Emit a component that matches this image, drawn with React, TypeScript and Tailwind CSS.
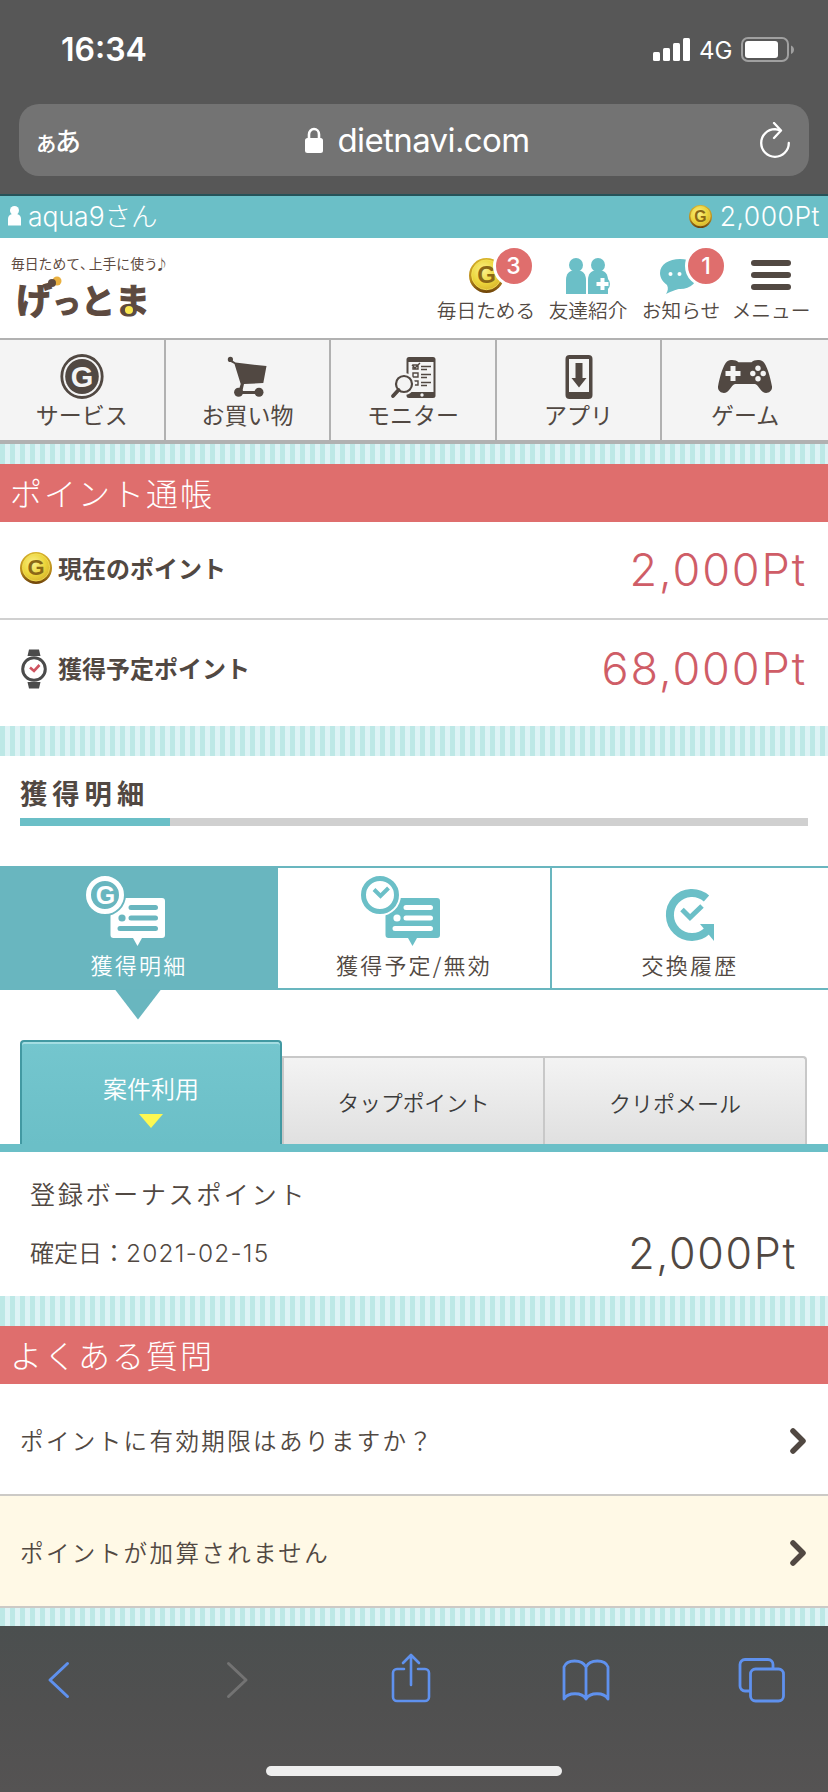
import type { ReactNode } from "react"

const NAV_ITEMS = [
  { label: "サービス", icon: <ServiceIcon /> },
  { label: "お買い物", icon: <CartIcon /> },
  { label: "モニター", icon: <MonitorIcon /> },
  { label: "アプリ", icon: <AppIcon /> },
  { label: "ゲーム", icon: <GameIcon /> },
]

const FAQ_ITEMS = [
  { question: "ポイントに有効期限はありますか？", className: "bg-white" },
  { question: "ポイントが加算されません", className: "bg-[#fff9e6]" },
]

function Coin({ className }: { className?: string }) {
  return (
    <svg viewBox="0 0 32 32" className={className}>
      <defs>
        <linearGradient id="coinRim" x1="0" y1="0" x2="0" y2="1">
          <stop offset="0" stopColor="#d8b42c" />
          <stop offset="0.6" stopColor="#b98a1c" />
          <stop offset="1" stopColor="#6d4208" />
        </linearGradient>
        <radialGradient id="coinFace" cx="0.4" cy="0.35" r="0.7">
          <stop offset="0" stopColor="#fbf08a" />
          <stop offset="0.6" stopColor="#ecd63c" />
          <stop offset="1" stopColor="#d9b52c" />
        </radialGradient>
      </defs>
      <circle cx="16" cy="16" r="16" fill="url(#coinRim)" />
      <circle cx="16" cy="15.4" r="13.6" fill="url(#coinFace)" stroke="#f4e25a" strokeWidth="0.8" />
      <text x="16" y="23" textAnchor="middle" fontSize="22" fontWeight="700" fill="#8a6716" fontFamily="Liberation Sans, sans-serif">G</text>
    </svg>
  )
}

function ServiceIcon() {
  return (
    <svg viewBox="0 0 44 46" className="w-[44px] h-[46px]">
      <ellipse cx="22" cy="23.5" rx="20.2" ry="21" fill="none" stroke="#514842" strokeWidth="2.8" />
      <ellipse cx="22" cy="23.5" rx="16.8" ry="17.6" fill="#514842" />
      <text x="22" y="33.5" textAnchor="middle" fontSize="29" fontWeight="700" fill="#f4f4f4" fontFamily="Liberation Sans, sans-serif">G</text>
    </svg>
  )
}

function CartIcon() {
  return (
    <svg viewBox="0 0 44 46" className="w-[44px] h-[46px]" fill="#514842">
      <circle cx="5.4" cy="6.4" r="2.6" />
      <path d="M5 6l5.5 3.5 31 3.6-3.2 17-19.3.8-1.6 7h14v3H12.5l3.2-9.8L9.5 11 4 8z" />
      <circle cx="13.6" cy="39.3" r="4.5" />
      <circle cx="34" cy="39.3" r="4.5" />
    </svg>
  )
}

function MonitorIcon() {
  return (
    <svg viewBox="0 0 48 46" className="w-[48px] h-[46px]">
      <rect x="17.5" y="4" width="29" height="41" rx="2.5" fill="#514842" />
      <rect x="19.5" y="9" width="25" height="30" fill="#f4f4f4" />
      <circle cx="33" cy="42" r="1.7" fill="#f4f4f4" />
      <g stroke="#514842" strokeWidth="1.4" fill="none">
        <path d="M24 12h5v4h-5zM24 20h5v4h-5zM24 28h5v4h-5zM32 13.5h10M32 16.5h6M32 21.5h10M32 24.5h6M32 29.5h10M32 32.5h6M23 12l3 3 5-5" />
      </g>
      <circle cx="15" cy="31" r="11" fill="#f4f4f4" />
      <path d="M9 37l-6 6" stroke="#f4f4f4" strokeWidth="7" />
      <circle cx="15" cy="31" r="8" fill="#f4f4f4" stroke="#514842" strokeWidth="2.2" />
      <path d="M9.5 37L4 43" stroke="#514842" strokeWidth="3.8" strokeLinecap="round" />
    </svg>
  )
}

function AppIcon() {
  return (
    <svg viewBox="0 0 28 46" className="w-[28px] h-[46px]" fill="#514842">
      <rect x="0.5" y="2" width="27" height="44" rx="4" />
      <rect x="4" y="6" width="20" height="33" fill="#f4f4f4" />
      <path d="M10.5 10h7v15h4L14 34.5 6.5 25h4z" />
    </svg>
  )
}

function GameIcon() {
  return (
    <svg viewBox="0 0 54 46" className="w-[54px] h-[46px]">
      <path d="M9 8.5c4-2.5 9-1.5 11.5.8h13C36 7 41 6 45 8.500c3.500 2.500 7.500 16 9 25 .6 5-5 8-9 5.500-3.500-2.200-5-8-8.500-8h-19c-3.500 0-5 5.800-8.500 8C5 41.500-.6 38.500 0 33.500c1.500-9 5.500-22.500 9-25z" fill="#514842" />
      <path d="M12.5 13h5v5h5v5h-5v5h-5v-5h-5v-5h5z" fill="#f4f4f4" />
      <g fill="#f4f4f4">
        <circle cx="40" cy="15.3" r="2.7" />
        <circle cx="40" cy="25.7" r="2.7" />
        <circle cx="34.8" cy="20.5" r="2.7" />
        <circle cx="45.2" cy="20.5" r="2.7" />
      </g>
    </svg>
  )
}

function FriendsIcon() {
  return (
    <svg viewBox="0 0 44 36" className="w-[44px] h-[36px]" fill="#6bbfc7">
      <circle cx="10" cy="7" r="7" />
      <path d="M0 36V22c0-6 3.500-9.500 7-9.500h6c3.500 0 7 3.500 7 9.500v14z" />
      <circle cx="32" cy="7" r="7" />
      <path d="M22 36V22c0-6 3.500-9.500 7-9.500h6c3.500 0 7 3.500 7 9.500v14z" />
      <circle cx="36.5" cy="26" r="7.5" />
      <path d="M34.5 20h4v4h4v4h-4v4h-4v-4h-4v-4h4z" fill="#fff" />
    </svg>
  )
}

function NewsIcon() {
  return (
    <svg viewBox="0 0 44 36" className="w-[44px] h-[36px]">
      <path d="M21 1c11 0 18 5.500 18 14S32 31 21 31c-2.500 0-7 1.500-14 5 2-3 2.500-6 1-9-4-3-7-7-7-12C1 6.500 10 1 21 1z" fill="#6bbfc7" />
      <circle cx="11.5" cy="16" r="2" fill="#fff" />
      <circle cx="20.5" cy="16" r="2" fill="#fff" />
    </svg>
  )
}

function WatchIcon() {
  return (
    <svg viewBox="0 0 28 40" className="w-[28px] h-[40px]">
      <path d="M9 0.500h10l1.500 6.500h-13zM7.500 33h13L19 39.500H9z" fill="#4b4b4b" />
      <circle cx="14" cy="20" r="11.3" fill="#fff" stroke="#4b4b4b" strokeWidth="3" />
      <path d="M10 18.500l4 3.500 5.500-6" fill="none" stroke="#cf5360" strokeWidth="2.6" />
    </svg>
  )
}

// speech bubble shared by the first two tabs, the badge in its corner differs
function DetailIcon({ color, bg, children }: { color: string; bg: string; children: ReactNode }) {
  return (
    <svg viewBox="0 0 106 72" className="w-[106px] h-[72px]">
      <path d="M27 24h49a3 3 0 013 3v34a3 3 0 01-3 3H56l-4.500 8L47 64H27.500a3 3 0 01-3-3V27a3 3 0 012.500-3z" fill={color} />
      <g stroke={bg} strokeWidth="5" strokeLinecap="round">
        <path d="M45 33.500h24.500M45 44h24.500M34 54.500h35.500" />
      </g>
      <circle cx="36" cy="44" r="3.6" fill={bg} />
      <circle cx="19" cy="21" r="21" fill={bg} />
      <circle cx="19" cy="21" r="16.5" fill={bg} stroke={color} strokeWidth="5" />
      {children}
    </svg>
  )
}

function HistoryIcon() {
  return (
    <svg viewBox="0 0 50 54" className="w-[50px] h-[54px]">
      <path d="M41.500 10.500A22 22 0 1042.500 42.500" fill="none" stroke="#6bbfc7" strokeWidth="8" />
      <path d="M35 36h14v17z" fill="#6bbfc7" />
      <path d="M17 21.500l8 8L37 18" fill="none" stroke="#6bbfc7" strokeWidth="5" />
    </svg>
  )
}

function Badge({ className, children }: { className: string; children: ReactNode }) {
  return (
    <span className={`absolute -top-[13px] w-[42px] h-[42px] rounded-full border-[3px] border-white bg-[#df6e6d] text-white text-[23px] leading-[36px] font-medium text-center font-['Inter',sans-serif] ${className}`}>
      {children}
    </span>
  )
}

function HeaderItem({ label, className, children }: { label: string; className: string; children: ReactNode }) {
  return (
    <div className={`flex flex-col items-center ${className}`}>
      <div className="relative h-9 flex justify-center">{children}</div>
      <span className="mt-[4px] text-[19.7px] leading-[24px] font-[350] whitespace-nowrap">{label}</span>
    </div>
  )
}

function Stripes({ className }: { className: string }) {
  return (
    <div className={`bg-[repeating-linear-gradient(90deg,#bde8e6_0px,#bde8e6_5px,#ddf3f5_5px,#ddf3f5_10px)] ${className}`} />
  )
}

function SectionTitle({ children }: { children: ReactNode }) {
  return (
    <h2 className="h-[58px] pl-[10px] bg-[#df6e6d] text-white font-light text-[32px] leading-[56px] tracking-[2px]">
      {children}
    </h2>
  )
}

export default function App() {
  return (
    <main className="w-[828px] h-[1792px] overflow-hidden flex flex-col bg-white text-[#514842] font-['Noto_Sans_CJK_JP',sans-serif]">
      {/* Status bar */}
      <div className="h-[104px] shrink-0 bg-[#575757] text-white flex justify-between pl-[61px] pr-[33px] font-['Inter',sans-serif]">
        <span className="mt-[30px] text-[32px] leading-[40px] font-semibold">16:34</span>
        <div className="mt-[36px] h-[28px] flex items-center">
          <svg viewBox="0 0 38 24" className="w-[38px] h-[24px]" fill="#fff">
            <rect x="0" y="14" width="7" height="9" rx="1.5" />
            <rect x="10" y="10" width="7" height="13" rx="1.5" />
            <rect x="20" y="5" width="7" height="18" rx="1.5" />
            <rect x="30" y="0" width="7" height="23" rx="1.5" />
          </svg>
          <span className="w-[50px] pl-[8px] pt-[2px] text-[24px] leading-[28px]">4G</span>
          <svg viewBox="0 0 54 26" className="w-[54px] h-[26px]">
            <rect x="1" y="1" width="46" height="23" rx="6" fill="none" stroke="#a0a0a0" strokeWidth="2" />
            <rect x="4" y="4" width="33" height="17" rx="3" fill="#fff" />
            <path d="M50 8.500c4 1.500 4 7 0 8.500z" fill="#a0a0a0" />
          </svg>
        </div>
      </div>

      {/* Address bar */}
      <div className="h-[92px] shrink-0 px-[19px] bg-[#575757] border-b-2 border-[#265258]">
        <div className="h-[72px] rounded-[20px] bg-[#737373] text-white flex items-center justify-between pl-[15px] pr-[18px]">
          <div className="w-[62px] flex items-baseline font-medium leading-[40px]">
            <span className="text-[24px] tracking-[-3px]">ぁ</span>
            <span className="text-[26px]">あ</span>
          </div>
          <div className="flex items-center mr-[20px]">
            <svg viewBox="0 0 18 26" className="w-[18px] h-[26px] mr-[14px]">
              <path d="M4 12V7.500a5 5.500 0 0110 0V12" fill="none" stroke="#fff" strokeWidth="2.6" />
              <rect x="0" y="11" width="18" height="15" rx="2.5" fill="#fff" />
            </svg>
            <span className="text-[33px] leading-[40px] tracking-[-0.6px] font-['Inter',sans-serif]">dietnavi.com</span>
          </div>
          <svg viewBox="0 0 32 36" className="w-[32px] h-[36px]" fill="none" stroke="#fff" strokeWidth="2.3" strokeLinecap="round" strokeLinejoin="round">
            <path d="M22 8.500L16 7.200A13.800 13.800 0 1029.800 21M15 1l7 7.500L15 16" />
          </svg>
        </div>
      </div>

      {/* User bar */}
      <div className="h-[42px] shrink-0 bg-[#6bbfc7] text-white text-[26.5px] leading-[41px] font-light flex justify-between px-[8px] font-['Inter','Noto_Sans_CJK_JP',sans-serif]">
        <div className="flex">
          <svg viewBox="0 0 13 20" className="w-[13px] h-[20px] mt-[10px] mr-[7px]" fill="#fff">
            <circle cx="6.5" cy="4.5" r="4.5" />
            <path d="M0 19.500V13q0-4 4-5h5q4 1 4 5v6.500z" />
          </svg>
          <span>aqua9さん</span>
        </div>
        <div className="flex">
          <Coin className="w-[23px] h-[23px] mt-[9px] mr-[8px]" />
          <span className="tracking-[0.5px]">2,000Pt</span>
        </div>
      </div>

      {/* Header */}
      <header className="h-[100px] shrink-0 flex justify-between pr-[9px]">
        <div className="pl-[11px] pt-[15px] text-[#5d4a40]">
          <p className="text-[13.8px] leading-[20px] whitespace-nowrap">
            毎日ためて<span className="tracking-[-5px]">、</span>上手に使う<span className="-ml-[3px]">♪</span>
          </p>
          <div className="relative h-[46px] w-[150px] flex items-baseline font-bold leading-[50px] pl-[5px] [-webkit-text-stroke:1.2px_#5d4a40]">
            <span className="text-[36px]">げ</span>
            <span className="text-[29px]">っ</span>
            <span className="text-[34px]">と</span>
            <span className="text-[35px]">ま</span>
            <svg viewBox="0 0 14 14" className="absolute left-[37px] top-[3px] w-[14px] h-[14px]">
              <circle cx="9" cy="5" r="4.5" fill="#e9b040" />
              <circle cx="4" cy="7" r="4" fill="#5d4a40" />
            </svg>
            <span className="absolute left-[114px] top-[33px] w-2 h-2 rounded-full bg-[#fbe84e]" />
          </div>
        </div>
        <div className="flex pt-[20px]">
          <HeaderItem label="毎日ためる" className="w-[102px]">
            <Coin className="w-[35px] h-[35px]" />
            <Badge className="left-[24px]">3</Badge>
          </HeaderItem>
          <HeaderItem label="友達紹介" className="w-[102px]">
            <FriendsIcon />
          </HeaderItem>
          <HeaderItem label="お知らせ" className="w-[84px]">
            <NewsIcon />
            <Badge className="left-[26px]">1</Badge>
          </HeaderItem>
          <HeaderItem label="メニュー" className="w-[96px]">
            <div className="flex flex-col gap-[6px] pt-[2px]">
              <span className="w-10 h-[6px] rounded-full bg-[#514842]" />
              <span className="w-10 h-[6px] rounded-full bg-[#514842]" />
              <span className="w-10 h-[6px] rounded-full bg-[#514842]" />
            </div>
          </HeaderItem>
        </div>
      </header>

      {/* Global nav */}
      <nav className="h-[106px] shrink-0 grid grid-cols-5 border-t-2 border-b-4 border-[#b1b1b1] bg-[#f4f4f4]">
        {NAV_ITEMS.map((item) => (
          <div key={item.label} className="flex flex-col items-center pt-[13px] border-r-2 border-[#b1b1b1] last:border-r-0">
            {item.icon}
            <span className="text-[23px] leading-[30px]">{item.label}</span>
          </div>
        ))}
      </nav>
      <Stripes className="h-[20px] shrink-0" />

      {/* Points */}
      <section className="shrink-0">
        <SectionTitle>ポイント通帳</SectionTitle>
        <div className="h-[98px] px-[20px] flex items-center justify-between border-b-2 border-[#d0d0d0]">
          <div className="flex items-center pb-[4px]">
            <Coin className="w-[32px] h-[32px] mr-[6px]" />
            <span className="text-[24px] font-bold">現在のポイント</span>
          </div>
          <span className="text-[45px] font-light text-[#cf5d67] mr-[1px] tracking-[1.9px] font-['Inter',sans-serif]">2,000Pt</span>
        </div>
        <div className="h-[106px] pb-[8px] px-[20px] flex items-center justify-between">
          <div className="flex items-center">
            <WatchIcon />
            <span className="ml-[10px] pb-[2px] text-[24px] font-bold">獲得予定ポイント</span>
          </div>
          <span className="text-[45px] font-light text-[#cf5d67] mr-[1px] tracking-[1.9px] font-['Inter',sans-serif]">68,000Pt</span>
        </div>
      </section>
      <Stripes className="h-[30px] shrink-0" />

      {/* Details */}
      <section className="shrink-0">
        <h3 className="mx-[20px] pt-[16px] h-[62px] text-[27.3px] leading-[40px] tracking-[5px] font-bold">獲得明細</h3>
        <div className="mx-[20px] h-[8px] bg-[#d0d0d0]">
          <div className="w-[150px] h-full bg-[#6bbfc7]" />
        </div>

        <div className="mt-[40px] h-[124px] grid grid-cols-[278px_274px_276px] border-y-2 border-[#69b6bf] text-[22px] leading-[30px] tracking-[2.2px] font-[350]">
          <div className="relative flex flex-col items-center pt-[6px] bg-[#69b6bf] text-white">
            <DetailIcon color="#ffffff" bg="#69b6bf">
              <text x="19.5" y="29.5" textAnchor="middle" fontSize="25" fontWeight="700" fill="#fff" letterSpacing="0" fontFamily="Liberation Sans, sans-serif">G</text>
            </DetailIcon>
            <span className="mt-[3px]">獲得明細</span>
            <svg viewBox="0 0 46 30" className="absolute top-[121px] left-[115px] w-[46px] h-[31px]">
              <path d="M0 0h46L23 30z" fill="#69b6bf" />
            </svg>
          </div>
          <div className="flex flex-col items-center pt-[6px] border-r-2 border-[#69b6bf]">
            <DetailIcon color="#6bbfc7" bg="#ffffff">
              <path d="M13 15.500l6.500 6.500 8-8" fill="none" stroke="#6bbfc7" strokeWidth="4" />
            </DetailIcon>
            <span className="mt-[3px]">獲得予定/無効</span>
          </div>
          <div className="flex flex-col items-center pt-[20px]">
            <HistoryIcon />
            <span className="mt-[7px]">交換履歴</span>
          </div>
        </div>

        <div className="mt-[50px] h-[112px] px-[20px] flex items-end border-b-8 border-[#6bbfc7] text-[#3c3c3c]">
          <div className="w-[262px] h-[104px] flex flex-col items-center pt-[28px] rounded-t-[4px] border-2 border-b-0 border-[#4299a2] bg-linear-to-b from-[#74c6ce] to-[#6bbfc7] shadow-[inset_0_2px_0_#a4dde2] text-white font-[350]">
            <span className="text-[24px] leading-[36px]">案件利用</span>
            <svg viewBox="0 0 24 14" className="mt-[8px] w-[24px] h-[14px]">
              <path d="M0 0h24L12 14z" fill="#fdf851" />
            </svg>
          </div>
          <div className="w-[263px] h-[88px] pt-[2px] flex items-center justify-center border-2 border-b-0 border-[#c8c8c8] bg-linear-to-b from-[#f3f3f3] to-[#e0e0e0] text-[21.7px] font-[350]">
            タップポイント
          </div>
          <div className="w-[262px] h-[88px] pt-[2px] flex items-center justify-center rounded-tr-[4px] border-t-2 border-r-2 border-[#c8c8c8] bg-linear-to-b from-[#f3f3f3] to-[#e0e0e0] text-[22px] font-[350]">
            クリポメール
          </div>
        </div>

        <div className="h-[144px] pl-[30px] pr-[31px] pt-[21px]">
          <p className="text-[25.2px] leading-[40px] tracking-[2.5px] font-[350]">登録ボーナスポイント</p>
          <div className="mt-[12px] h-[56px] flex items-center justify-between">
            <span className="text-[24px] font-[350]">
              確定日：<span className="tracking-[1.2px] text-[24.5px] font-[350] font-['Inter',sans-serif]">2021-02-15</span>
            </span>
            <span className="text-[43px] tracking-[1.7px] font-light font-['Inter',sans-serif]">2,000Pt</span>
          </div>
        </div>
      </section>
      <Stripes className="h-[30px] shrink-0" />

      {/* FAQ */}
      <section className="shrink-0">
        <SectionTitle>よくある質問</SectionTitle>
        {FAQ_ITEMS.map((item) => (
          <div key={item.question} className={`h-[112px] px-[20px] pt-[3px] flex items-center justify-between border-b-2 border-[#cccac6] ${item.className}`}>
            <span className="text-[23.5px] tracking-[2.4px] font-[350]">{item.question}</span>
            <svg viewBox="0 0 20 28" className="w-[20px] h-[28px]" fill="none" stroke="#514842" strokeWidth="5.5" strokeLinecap="round" strokeLinejoin="round">
              <path d="M5 4l10 10L5 24" />
            </svg>
          </div>
        ))}
      </section>
      <Stripes className="h-[18px] shrink-0" />

      {/* Browser toolbar */}
      <footer className="h-[166px] shrink-0 bg-linear-to-b from-[#4b4f4f] via-[#505050] to-[#555353] flex flex-col items-center">
        <div className="w-full mt-[26px] pl-[32px] pr-[39px] flex justify-between">
          <svg viewBox="0 0 54 54" className="w-[54px] h-[54px]" fill="none" stroke="#5f91ee" strokeWidth="3" strokeLinecap="round" strokeLinejoin="round">
            <path d="M35.500 11.500L18 28l17.500 16.500" />
          </svg>
          <svg viewBox="0 0 54 54" className="w-[54px] h-[54px]" fill="none" stroke="#737373" strokeWidth="3" strokeLinecap="round" strokeLinejoin="round">
            <path d="M20.500 11.500L38 28 20.500 44.500" />
          </svg>
          <svg viewBox="0 0 54 54" className="w-[54px] h-[54px]" fill="none" stroke="#5f91ee" strokeWidth="2.6" strokeLinecap="round" strokeLinejoin="round">
            <path d="M20 17h-7a4 4 0 00-4 4v24a4 4 0 004 4h28a4 4 0 004-4V21a4 4 0 00-4-4h-7M27 33V3.500M19 11l8-8 8 8" />
          </svg>
          <svg viewBox="0 0 54 54" className="w-[54px] h-[54px]" fill="none" stroke="#5f91ee" strokeWidth="2.8" strokeLinecap="round" strokeLinejoin="round">
            <path d="M27 47V15C23 7 8 7 5 15v32c4-7 18-7 22 0 4-7 18-7 22 0V15C46 7 31 7 27 15" />
          </svg>
          <svg viewBox="0 0 54 54" className="w-[54px] h-[54px]" fill="none" stroke="#5f91ee" strokeWidth="2.8" strokeLinejoin="round">
            <path d="M15.500 39H10a5 5 0 01-5-5V12.500a5 5 0 015-5h23a5 5 0 015 5V17" />
            <rect x="15.5" y="17" width="33" height="32" rx="5" />
          </svg>
        </div>
        <div className="mt-[60px] w-[296px] h-[10px] rounded-full bg-[#eee]" />
      </footer>
    </main>
  )
}
